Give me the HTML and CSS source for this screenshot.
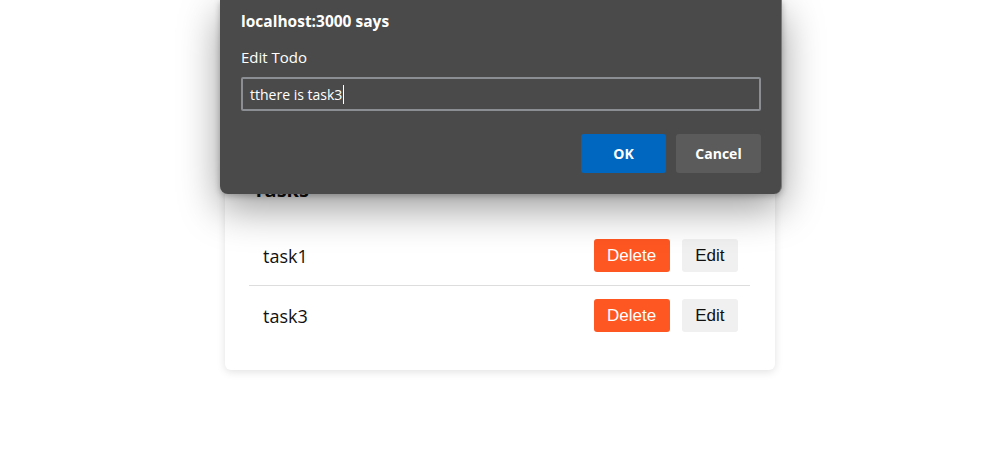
FILE: index.html
```html
<!DOCTYPE html>
<html lang="en">
<head>
<meta charset="utf-8">
<title>Todo</title>
<link rel="stylesheet" href="styles.css">
</head>
<body>
<main class="page">
  <section class="card">
    <h2 class="card-title">Tasks</h2>
    <ul class="todo-list">
      <li class="todo-row">
        <span class="todo-text">task1</span>
        <div class="todo-actions">
          <button class="btn btn-delete">Delete</button>
          <button class="btn btn-edit">Edit</button>
        </div>
      </li>
      <li class="todo-row">
        <span class="todo-text">task3</span>
        <div class="todo-actions">
          <button class="btn btn-delete">Delete</button>
          <button class="btn btn-edit">Edit</button>
        </div>
      </li>
    </ul>
  </section>
</main>

<div class="dialog">
  <div class="dialog-title">localhost:3000 says</div>
  <div class="dialog-label">Edit Todo</div>
  <div class="dialog-input"><span class="input-value">tthere is task3</span><span class="caret"></span></div>
  <div class="dialog-buttons">
    <button class="dbtn dbtn-ok">OK</button>
    <button class="dbtn dbtn-cancel">Cancel</button>
  </div>
</div>
</body>
</html>
```

FILE: styles.css
```css
html, body {
  margin: 0;
  padding: 0;
  background: #ffffff;
}

body {
  font-family: "Open Sans", "Noto Sans", sans-serif;
  color: #111;
  width: 982px;
  height: 449px;
  overflow: hidden;
  position: relative;
}

.page {
  padding-top: 158px;
  padding-left: 225px;
}

.card {
  width: 550px;
  box-sizing: border-box;
  background: #fff;
  border-radius: 6px;
  box-shadow: 0 2px 8px rgba(0, 0, 0, 0.12);
  padding: 20px 25px 25px 24px;
}

.card-title {
  margin: 0 0 24px;
  padding-left: 4px;
  font-size: 20px;
  line-height: 24px;
  font-weight: 700;
}

.todo-list {
  list-style: none;
  margin: 0;
  padding: 0;
}

.todo-row {
  display: flex;
  align-items: center;
  justify-content: space-between;
  height: 59px;
  padding: 0 12px 0 14px;
  border-bottom: 1px solid #dddddd;
}

.todo-row:last-child {
  border-bottom: none;
}

.todo-text {
  font-size: 18px;
  line-height: 24px;
  color: #111;
}

.todo-actions {
  display: flex;
  gap: 12px;
}

.btn {
  font-family: "Liberation Sans", Arial, sans-serif;
  font-size: 17px;
  height: 33px;
  padding: 0 13.5px;
  border: none;
  border-radius: 3px;
  cursor: pointer;
}

.btn-delete {
  background: #ff5722;
  color: #fff;
}

.btn-edit {
  background: #f0f0f0;
  color: #111;
}

.dialog {
  position: absolute;
  top: 0;
  left: 220px;
  width: 520px;
  padding: 11px 20px 21px 21px;
  background: #4a4a4a;
  border-right: 1px solid #7a7a7a;
  border-radius: 0 0 8px 8px;
  box-shadow: 0 14px 40px rgba(0, 0, 0, 0.4), 0 2px 6px rgba(0, 0, 0, 0.25);
  color: #fff;
}

.dialog-title {
  font-size: 15.5px;
  font-weight: 700;
  line-height: 20px;
}

.dialog-label {
  margin-top: 16px;
  font-size: 15px;
  line-height: 20px;
}

.dialog-input {
  margin-top: 10px;
  height: 34px;
  box-sizing: border-box;
  border: 2px solid #8b8e93;
  border-radius: 2px;
  display: flex;
  align-items: center;
  padding-left: 7px;
  font-size: 14px;
}

.caret {
  display: inline-block;
  width: 1px;
  height: 19px;
  margin-left: 1px;
  background: #fff;
}

.dialog-buttons {
  margin-top: 23px;
  display: flex;
  justify-content: flex-end;
  gap: 10px;
}

.dbtn {
  width: 85px;
  height: 39px;
  border: none;
  border-radius: 3px;
  font-family: "Open Sans", "Noto Sans", sans-serif;
  font-size: 14px;
  font-weight: 700;
  color: #fff;
}

.dbtn-ok {
  background: #0067c0;
}

.dbtn-cancel {
  background: #5b5b5b;
}
```
